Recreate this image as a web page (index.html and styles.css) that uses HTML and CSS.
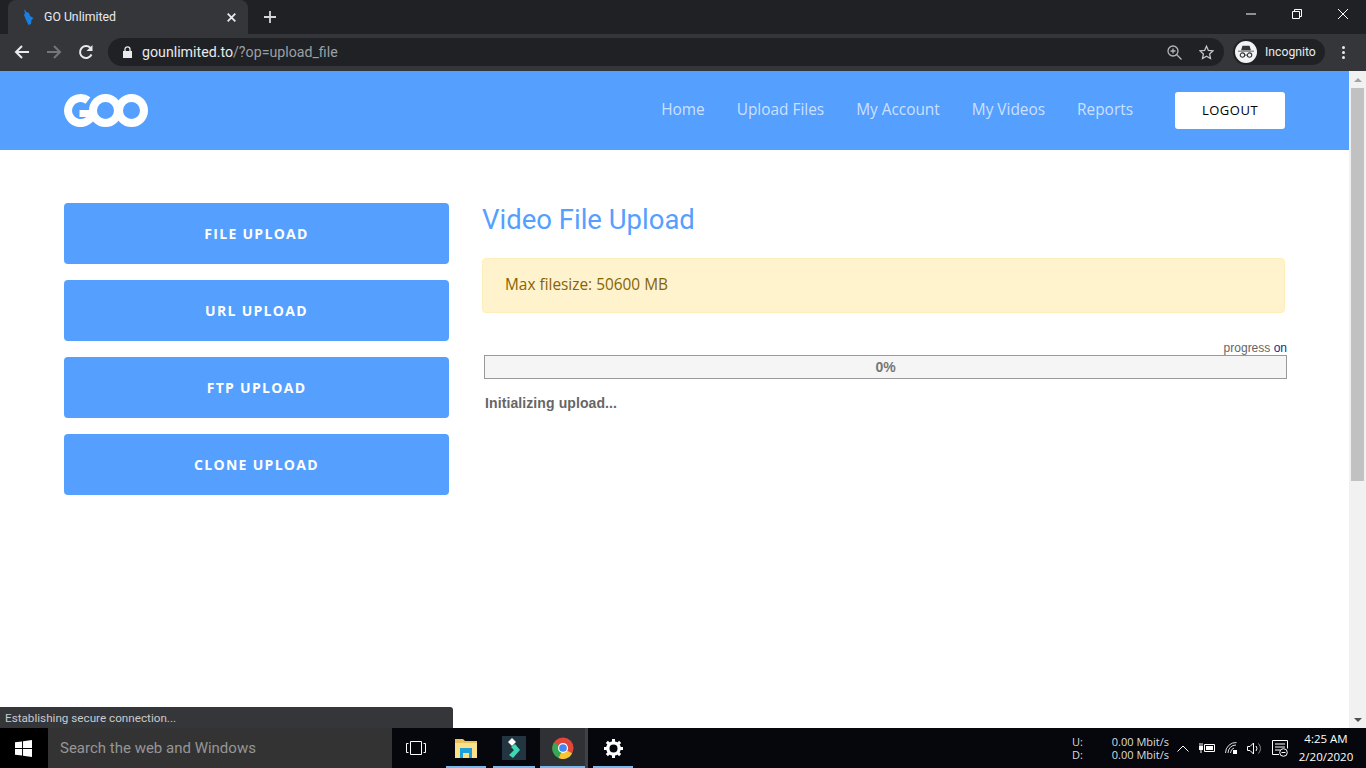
FILE: index.html
```html
<!DOCTYPE html>
<html lang="en">

<head>
    <meta charset="UTF-8">
    <title>GO Unlimited</title>
    <link rel="stylesheet" href="styles.css">
</head>

<body>
    <div class="tabstrip">
        <div class="tab">
            <svg class="favicon" width="11" height="16" viewBox="0 0 11 16"><path d="M1 0l2.500 3L6 4l1 3 3.500 2-2 2-.5 4-2.500 1-2-4L1 6l1-2z" fill="#1a7fe0"/></svg>
            <span class="tab-title">GO Unlimited</span>
            <svg class="tab-close" width="9" height="9" viewBox="0 0 9 9"><path d="M.7.7l7.600 7.600M8.300.7L.7 8.300" stroke="#e8eaed" stroke-width="1.800"/></svg>
        </div>
        <svg class="new-tab" width="12" height="12" viewBox="0 0 12 12"><path d="M6 0v12M0 6h12" stroke="#d5d7da" stroke-width="1.800"/></svg>
        <div class="win-controls">
            <svg width="10" height="10" viewBox="0 0 10 10"><path d="M0 5h10" stroke="#fff"/></svg>
            <svg width="10" height="10" viewBox="0 0 10 10"><path d="M.5 2.500h7v7h-7zM2.500 2.500v-2h7v7h-2" fill="none" stroke="#fff"/></svg>
            <svg width="10" height="10" viewBox="0 0 10 10"><path d="M0 0l10 10M10 0L0 10" stroke="#fff"/></svg>
        </div>
    </div>

    <div class="toolbar">
        <svg class="nav-icon" width="16" height="16" viewBox="0 0 16 16"><path d="M15 8H2M8 2L2 8l6 6" fill="none" stroke="#e8eaed" stroke-width="2"/></svg>
        <svg class="nav-icon" width="16" height="16" viewBox="0 0 16 16"><path d="M1 8h13M8 2l6 6-6 6" fill="none" stroke="#74767a" stroke-width="2"/></svg>
        <svg class="nav-icon" width="16" height="16" viewBox="0 0 16 16"><path d="M13.500 10.500A6 6 0 1 1 12.300 3.800" fill="none" stroke="#e8eaed" stroke-width="2"/><path d="M14.500 1v6h-6z" fill="#e8eaed"/></svg>
        <div class="omnibox">
            <svg class="lock" width="9" height="12" viewBox="0 0 9 12"><path d="M0 5h9v7H0z" fill="#e8eaed"/><path d="M2 5V3.300a2.500 2.500 0 0 1 5 0V5" fill="none" stroke="#e8eaed" stroke-width="1.300"/></svg>
            <span class="url"><span class="url-host">gounlimited.to</span>/?op=upload_file</span>
            <svg class="omni-zoom" width="15" height="15" viewBox="0 0 15 15"><circle cx="6" cy="6" r="5" fill="none" stroke="#b4b6b9" stroke-width="1.300"/><path d="M9.500 9.500l5 5M3.500 6h5M6 3.500v5" stroke="#b4b6b9" stroke-width="1.300"/></svg>
            <svg class="omni-star" width="15" height="15" viewBox="0 0 15 15"><path d="M7.500 1.200l1.900 4.200 4.600.5-3.400 3.100.9 4.600-4-2.300-4 2.300.9-4.600L1 5.900l4.600-.5z" fill="none" stroke="#c4c6c9" stroke-width="1.300"/></svg>
        </div>
        <div class="incognito">
            <span class="incognito-badge">
                <svg width="18" height="14" viewBox="0 0 18 14"><path d="M5 0h8l1.500 5h-11zM0 5.500h18v1H0z" fill="#35363a"/><circle cx="5" cy="10.500" r="2.500" fill="none" stroke="#35363a" stroke-width="1.200"/><circle cx="13" cy="10.500" r="2.500" fill="none" stroke="#35363a" stroke-width="1.200"/><path d="M7.500 10.500h3" stroke="#35363a"/></svg>
            </span>
            <span class="incognito-label">Incognito</span>
        </div>
        <div class="kebab"><i></i><i></i><i></i></div>
    </div>

    <div class="viewport">
        <div class="page">
            <header class="site-header">
                <svg class="logo" width="84" height="33" viewBox="0 0 84 33">
                    <g fill="none" stroke="#fff" stroke-width="8">
                        <path d="M24 6.500A12.500 12.500 0 1 0 29 18"/>
                        <circle cx="41.500" cy="16.500" r="12.500"/>
                        <circle cx="67.500" cy="16.500" r="12.500"/>
                    </g>
                    <path d="M15.500 16H29v7H15.500z" fill="#fff"/>
                </svg>
                <nav class="site-nav">
                    <a>Home</a>
                    <a>Upload Files</a>
                    <a>My Account</a>
                    <a>My Videos</a>
                    <a>Reports</a>
                </nav>
                <a class="logout">LOGOUT</a>
            </header>

            <main class="content">
                <aside class="side-menu">
                    <a class="side-btn">FILE UPLOAD</a>
                    <a class="side-btn">URL UPLOAD</a>
                    <a class="side-btn">FTP UPLOAD</a>
                    <a class="side-btn">CLONE UPLOAD</a>
                </aside>
                <section class="upload">
                    <h1>Video File Upload</h1>
                    <div class="alert">Max filesize: 50600 MB</div>
                    <div class="progress-toggle">progress <a>on</a></div>
                    <div class="progress-bar">0%</div>
                    <div class="progress-status">Initializing upload...</div>
                </section>
            </main>

            <div class="status-bubble">Establishing secure connection...</div>
        </div>
        <div class="scrollbar">
            <span class="arrow-up"></span>
            <div class="thumb"></div>
            <span class="arrow-down"></span>
        </div>
    </div>

    <div class="taskbar">
        <div class="start">
            <svg width="17" height="17" viewBox="0 0 18 18"><path d="M0 2.500l7.500-1v7H0zM8.500 1.300L18 0v8.500H8.500zM0 9.500h7.500v7l-7.500-1zM8.500 9.500H18V18l-9.500-1.300z" fill="#fff"/></svg>
        </div>
        <div class="search">Search the web and Windows</div>
        <div class="task-btn task-view">
            <svg width="20" height="14" viewBox="0 0 20 14"><path d="M4.500.5h11v13h-11zM2.500 2.500H.5v9h2M17.500 2.500h2v9h-2" fill="none" stroke="#fff"/></svg>
        </div>
        <div class="task-btn running">
            <svg width="22" height="19" viewBox="0 0 22 19"><path d="M0 0h8l2 2h12v17H0z" fill="#e8c25c"/><path d="M0 4h22v15H0z" fill="#fbe08c"/><path d="M5 9h12v10h-3v-5H8v5H5z" fill="#1f9fd8"/></svg>
        </div>
        <div class="task-btn running tile-btn">
            <span class="app-tile">
                <svg width="14" height="20" viewBox="0 0 14 20"><path d="M5 0l4 4-4 4-4-4z" fill="#fff"/><path d="M8 6l5 6-7 8-4-3 5-5-3-3z" fill="#3fd8b4"/></svg>
            </span>
        </div>
        <div class="task-btn running active">
            <svg width="22" height="22" viewBox="0 0 24 24"><circle cx="12" cy="12" r="11.500" fill="#e0463a"/><path d="M12 12L22 18a11.500 11.500 0 0 1-15 5z" fill="#f7c531"/><path d="M12 12L7 23A11.500 11.500 0 0 1 2.300 6z" fill="#35a853"/><circle cx="12" cy="12" r="5.500" fill="#fff"/><circle cx="12" cy="12" r="4.200" fill="#4285f4"/></svg>
        </div>
        <div class="task-btn running gear-btn">
            <svg width="19" height="19" viewBox="0 0 20 20"><circle cx="10" cy="10" r="6" fill="none" stroke="#fff" stroke-width="3.500"/><path d="M10 0v4M10 16v4M0 10h4M16 10h4M3 3l2.800 2.800M14.200 14.200L17 17M17 3l-2.800 2.800M5.800 14.200L3 17" stroke="#fff" stroke-width="3.200"/></svg>
        </div>

        <div class="net-speed">
            <div class="net-row"><span>U:</span><span>0.00 Mbit/s</span></div>
            <div class="net-row"><span>D:</span><span>0.00 Mbit/s</span></div>
        </div>
        <div class="tray">
            <svg width="12" height="7" viewBox="0 0 12 7"><path d="M.5 6.500L6 1l5.500 5.500" fill="none" stroke="#fff"/></svg>
            <svg width="16" height="10" viewBox="0 0 16 10"><path d="M5.500 1.500h10v7h-10z" fill="none" stroke="#fff"/><path d="M7 3h7v4H7zM0 3h4v4H0z" fill="#fff"/><path d="M1 0v3M3 0v3M2 7v3" stroke="#fff"/></svg>
            <svg width="12" height="12" viewBox="0 0 12 12"><g fill="none" stroke="#ddd"><path d="M.5 11a10.500 10.500 0 0 1 11-10.500M3 11a8 8 0 0 1 8-8M5.500 11A5.500 5.500 0 0 1 9 6"/></g><path d="M8 8h4v4H8z" fill="#fff"/></svg>
            <svg width="15" height="13" viewBox="0 0 15 13"><path d="M.5 4.500h2.500L6.500 1v11L3 8.500H.5z" fill="none" stroke="#fff"/><path d="M9 4a4 4 0 0 1 0 5" fill="none" stroke="#fff"/><path d="M11.500 1.500a8 8 0 0 1 0 10" fill="none" stroke="#888"/></svg>
            <svg width="16" height="17" viewBox="0 0 16 17"><path d="M7 14.500H.5V.5h15v8M3 4h10M3 7h10M3 10h5" fill="none" stroke="#fff"/><circle cx="11.500" cy="12.500" r="3.800" fill="#05070c" stroke="#fff"/><path d="M9.500 12.500h4" stroke="#fff"/></svg>
        </div>
        <div class="clock">
            <span>4:25 AM</span>
            <span>2/20/2020</span>
        </div>
    </div>
</body>

</html>
```

FILE: styles.css
```css
* {
    box-sizing: border-box;
}

html,
body {
    height: 100%;
}

body {
    margin: 0;
    overflow: hidden;
    display: flex;
    flex-direction: column;
    font-family: "Open Sans", sans-serif;
    background-color: #fff;
}

a {
    text-decoration: none;
}

/* browser chrome */
.tabstrip {
    height: 34px;
    flex: none;
    display: flex;
    align-items: flex-end;
    background-color: #202124;
    padding-left: 8px;
}

.tab {
    width: 240px;
    height: 34px;
    display: flex;
    align-items: center;
    padding: 0 12px 0 15px;
    background-color: #35363a;
    border-radius: 8px 8px 0 0;
}

.favicon {
    flex: none;
}

.tab-title {
    flex: 1;
    margin-left: 10px;
    font: 12.300px "Roboto", sans-serif;
    color: #e8eaed;
}

.new-tab {
    align-self: center;
    margin-left: 16px;
}

.win-controls {
    margin-left: auto;
    align-self: flex-start;
    display: flex;
    gap: 36px;
    padding: 9px 18px 0 0;
}

.toolbar {
    height: 37px;
    flex: none;
    display: flex;
    align-items: center;
    padding: 0 0 1px 14px;
    background-color: #35363a;
}

.nav-icon {
    margin-right: 16px;
    flex: none;
}

.omnibox {
    width: 1116px;
    height: 28px;
    margin-left: -2px;
    display: flex;
    align-items: center;
    padding: 0 10px 0 15px;
    border-radius: 14px;
    background-color: #202124;
}

.lock {
    flex: none;
}

.url {
    flex: 1;
    margin-left: 10px;
    font: 14.200px "Roboto", sans-serif;
    color: #9aa0a6;
}

.url-host {
    color: #e8eaed;
}

.omni-zoom {
    margin-right: 17px;
}

.incognito {
    width: 92px;
    height: 26px;
    margin-left: 9px;
    display: flex;
    align-items: center;
    padding-left: 2px;
    border-radius: 13px;
    background-color: #202124;
}

.incognito-badge {
    width: 22px;
    height: 22px;
    display: flex;
    align-items: center;
    justify-content: center;
    border-radius: 50%;
    background-color: #f1f3f4;
}

.incognito-badge svg {
    width: 16px;
    height: 14px;
}

.incognito-label {
    margin-left: 8px;
    font: 12.200px "Roboto", sans-serif;
    color: #e8eaed;
}

.kebab {
    margin-left: 17px;
    display: flex;
    flex-direction: column;
    gap: 2px;
}

.kebab i {
    width: 3px;
    height: 3px;
    background-color: #e8eaed;
    border-radius: 50%;
}

/* page */
.viewport {
    flex: 1;
    min-height: 0;
    display: flex;
    position: relative;
}

.page {
    flex: 1;
    min-width: 0;
}

.site-header {
    height: 79px;
    display: flex;
    align-items: center;
    padding: 0 64px;
    background-color: #559fff;
}

.logo {
    flex: none;
}

.site-nav {
    margin-left: auto;
    padding-bottom: 3px;
    display: flex;
    gap: 32px;
    font-size: 15.400px;
    color: rgba(255, 255, 255, 0.7);
}

.logout {
    width: 110px;
    height: 37px;
    margin-left: 42px;
    padding-bottom: 1px;
    display: flex;
    align-items: center;
    justify-content: center;
    background-color: #fff;
    border-radius: 3px;
    font-size: 13px;
    font-weight: 500;
    letter-spacing: 0.5px;
    color: #000;
}

.content {
    display: flex;
    padding: 53px 64px 0;
    gap: 33px;
}

.side-menu {
    width: 385px;
    flex: none;
    display: flex;
    flex-direction: column;
    gap: 16px;
}

.side-btn {
    height: 61px;
    display: flex;
    align-items: center;
    justify-content: center;
    background-color: #559fff;
    border-radius: 4px;
    font-size: 14px;
    font-weight: 700;
    letter-spacing: 1.300px;
    color: #fff;
}

.upload {
    flex: 1;
    min-width: 0;
}

.upload h1 {
    margin: 0;
    font: 400 27.500px/34px "Roboto", sans-serif;
    color: #559fff;
}

.alert {
    height: 55px;
    margin-top: 21px;
    padding-left: 22px;
    padding-bottom: 2px;
    display: flex;
    align-items: center;
    background-color: #fff3cd;
    border: 1px solid #ffeeba;
    border-radius: 4px;
    font-size: 15.400px;
    color: #856404;
}

.progress-toggle {
    margin: 28px -2px 0 0;
    text-align: right;
    font: 12px/14px "Liberation Sans", sans-serif;
    color: #666;
}

.progress-toggle a {
    color: #003399;
}

.progress-bar {
    height: 24px;
    margin: 0 -2px 0 2px;
    display: flex;
    align-items: center;
    justify-content: center;
    background-color: #f5f5f5;
    border: 1px solid #999;
    font: bold 14px "Liberation Sans", sans-serif;
    color: #777;
}

.progress-status {
    margin: 16px 0 0 3px;
    font: bold 14px/16px "Liberation Sans", sans-serif;
    letter-spacing: 0.100px;
    color: #666;
}

.status-bubble {
    position: absolute;
    left: 0;
    bottom: 0;
    width: 453px;
    height: 21px;
    padding: 4px 5px 0;
    background-color: #35363a;
    border-radius: 0 3px 0 0;
    font: 11.700px "Roboto", sans-serif;
    color: #c8cacc;
}

.scrollbar {
    width: 17px;
    flex: none;
    display: flex;
    flex-direction: column;
    align-items: center;
    background-color: #f1f1f1;
}

.thumb {
    width: 13px;
    height: 393px;
    margin-top: 6px;
    background-color: #c1c1c1;
}

.arrow-up,
.arrow-down {
    width: 0;
    height: 0;
    border: 4px solid transparent;
}

.arrow-up {
    margin-top: 7px;
    border-top: 0;
    border-bottom: 4px solid #a3a3a3;
}

.arrow-down {
    margin-top: auto;
    margin-bottom: 6px;
    border-bottom: 0;
    border-top: 4px solid #505050;
}

/* taskbar */
.taskbar {
    height: 40px;
    flex: none;
    display: flex;
    align-items: center;
    background-color: #05070c;
    color: #fff;
}

.start {
    width: 48px;
    height: 100%;
    padding-right: 2px;
    display: flex;
    align-items: center;
    justify-content: center;
    background-color: #000;
}

.search {
    width: 344px;
    height: 100%;
    display: flex;
    align-items: center;
    padding-left: 12px;
    background-color: #333;
    font: 15px "Roboto", sans-serif;
    color: #969696;
}

.task-btn {
    height: 100%;
    display: flex;
    align-items: center;
    justify-content: center;
}

.task-view {
    width: 54px;
    justify-content: flex-end;
    padding-right: 20px;
}

.running {
    width: 40px;
    box-shadow: inset 0 -2px 0 #76b9ed;
}

.tile-btn {
    width: 42px;
    margin: 0 5px 0 7px;
}

.active {
    width: 48px;
    margin-right: 5px;
    padding-left: 1px;
    background-color: #2f3134;
    border-right: 3px solid #3e4145;
}

.app-tile {
    width: 24px;
    height: 24px;
    display: flex;
    align-items: center;
    justify-content: center;
    background-color: #223540;
}

.net-speed {
    margin-left: auto;
    width: 97px;
    font: 11px/13px "Open Sans", sans-serif;
    color: #ddd;
}

.net-row {
    display: flex;
    justify-content: space-between;
}

.tray {
    display: flex;
    align-items: center;
    gap: 10px;
    margin-left: 8px;
}

.clock {
    width: 66px;
    margin: 0 7px 0 5px;
    display: flex;
    flex-direction: column;
    align-items: center;
    font: 11.500px/18px "Open Sans", sans-serif;
    color: #fff;
}
```
